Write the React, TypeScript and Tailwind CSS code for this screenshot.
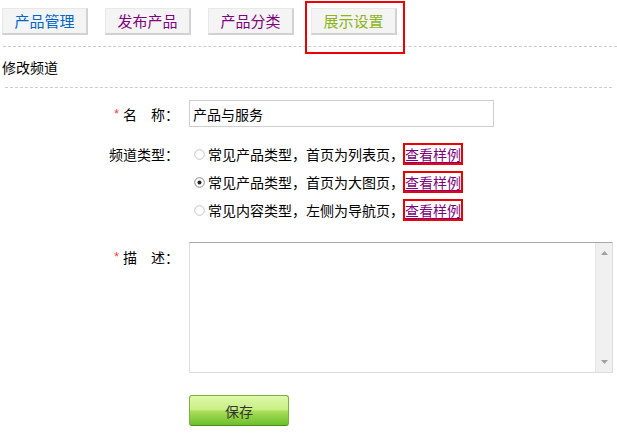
import React from "react";

const Radio = ({ checked }: { checked?: boolean }) => (
  <svg width="11" height="11" viewBox="0 0 11 11" className="shrink-0">
    <circle cx="5.5" cy="5.5" r="4.8" fill="#fff" stroke={checked ? "#8a8a8a" : "#c4c4c4"} strokeWidth="1" />
    {checked && <circle cx="5.5" cy="5.5" r="2" fill="#222" />}
  </svg>
);

const Tab = ({ label, color, highlight }: { label: string; color: string; highlight?: boolean }) => (
  <div className="relative">
    <div
      className={`w-[86px] h-[27px] flex items-center justify-center bg-[#f4f4f4] border-l border-t border-[#e8e8e8] border-r-2 border-b-2 border-r-[#d2d2d2] border-b-[#d2d2d2] text-[15px] leading-[20px] ${color}`}
    >
      {label}
    </div>
    {highlight && (
      <div className="absolute left-[-6px] top-[-7px] right-[-8px] bottom-[-8px] border-[2px] border-[#ee0000] pointer-events-none" />
    )}
  </div>
);

const Star = () => (
  <span className="text-[#ff3333] text-[12px] leading-[12px] font-['Liberation_Sans',sans-serif] relative top-[0px] mr-[4px]">*</span>
);

const RadioRow = ({ text, checked }: { text: string; checked?: boolean }) => (
  <div className="h-[28px] flex items-center pl-[5px]">
    <Radio checked={checked} />
    <span className="ml-[3px] leading-[18px]">{text}</span>
    <a className="border-2 border-[#ee0000] h-[22px] flex items-center text-[#800080] underline underline-offset-2 leading-[18px] ml-[-1px]">
      查看样例
    </a>
  </div>
);

export default function App() {
  return (
    <div className="w-[617px] h-[436px] bg-white text-black text-[14px] font-['Noto_Sans_CJK_SC','Noto_Sans',sans-serif] overflow-hidden">
      <div className="h-[46px] flex gap-[17px] pl-[2px] pt-[8px]">
        <Tab label="产品管理" color="text-[#0066cc]" />
        <Tab label="发布产品" color="text-[#800080]" />
        <Tab label="产品分类" color="text-[#800080]" />
        <Tab label="展示设置" color="text-[#8cb41c]" highlight />
      </div>
      <div className="ml-[3px] border-t border-dashed border-[#cccccc]" />
      <div className="h-[40px] flex items-center pl-[2px] leading-[20px]">修改频道</div>
      <div className="mx-[5px] border-t border-dashed border-[#cccccc]" />

      <div className="flex mt-[12px]">
        <div className="w-[179px] shrink-0 flex items-center justify-end h-[27px] leading-[20px]">
          <Star />
          <span>名　称：</span>
        </div>
        <input
          className="ml-[10px] w-[305px] h-[27px] border border-[#cfcfcf] px-[3px] text-[14px] text-black outline-none font-['Noto_Sans_CJK_SC','Noto_Sans',sans-serif]"
          defaultValue="产品与服务"
        />
      </div>

      <div className="flex mt-[13px]">
        <div className="w-[179px] shrink-0 flex items-center justify-end h-[28px] leading-[20px]">频道类型：</div>
        <div className="ml-[10px] flex flex-col">
          <RadioRow text="常见产品类型，首页为列表页，" />
          <RadioRow text="常见产品类型，首页为大图页，" checked />
          <RadioRow text="常见内容类型，左侧为导航页，" />
        </div>
      </div>

      <div className="flex mt-[18px]">
        <div className="w-[179px] shrink-0 flex items-center justify-end h-[28px] mt-[1px] leading-[20px]">
          <Star />
          <span>描　述：</span>
        </div>
        <div className="ml-[10px] w-[424px] h-[131px] flex border border-[#dddddd] border-t-[#a8a8a8] bg-white">
          <textarea className="flex-1 resize-none outline-none overflow-hidden bg-white" />
          <div className="w-[17px] bg-[#f0f0f0] border-l border-[#e6e6e6] flex flex-col items-center justify-between py-[8px]">
            <svg width="7" height="4" viewBox="0 0 7 4">
              <path d="M0 4 L3.5 0 L7 4 Z" fill="#a0a0a0" />
            </svg>
            <svg width="7" height="4" viewBox="0 0 7 4">
              <path d="M0 0 L3.5 4 L7 0 Z" fill="#a0a0a0" />
            </svg>
          </div>
        </div>
      </div>

      <div className="mt-[22px] ml-[189px]">
        <button className="w-[100px] h-[31px] rounded-[3px] border border-[#7fb03c] border-b-[#4f8a1c] bg-[linear-gradient(to_bottom,#def9a8_0%,#c9ee86_46%,#a8dc58_54%,#6cc02a_100%)] text-[#333333] text-[14px] leading-[20px] font-['Noto_Sans_CJK_SC','Noto_Sans',sans-serif]">
          保存
        </button>
      </div>
    </div>
  );
}
